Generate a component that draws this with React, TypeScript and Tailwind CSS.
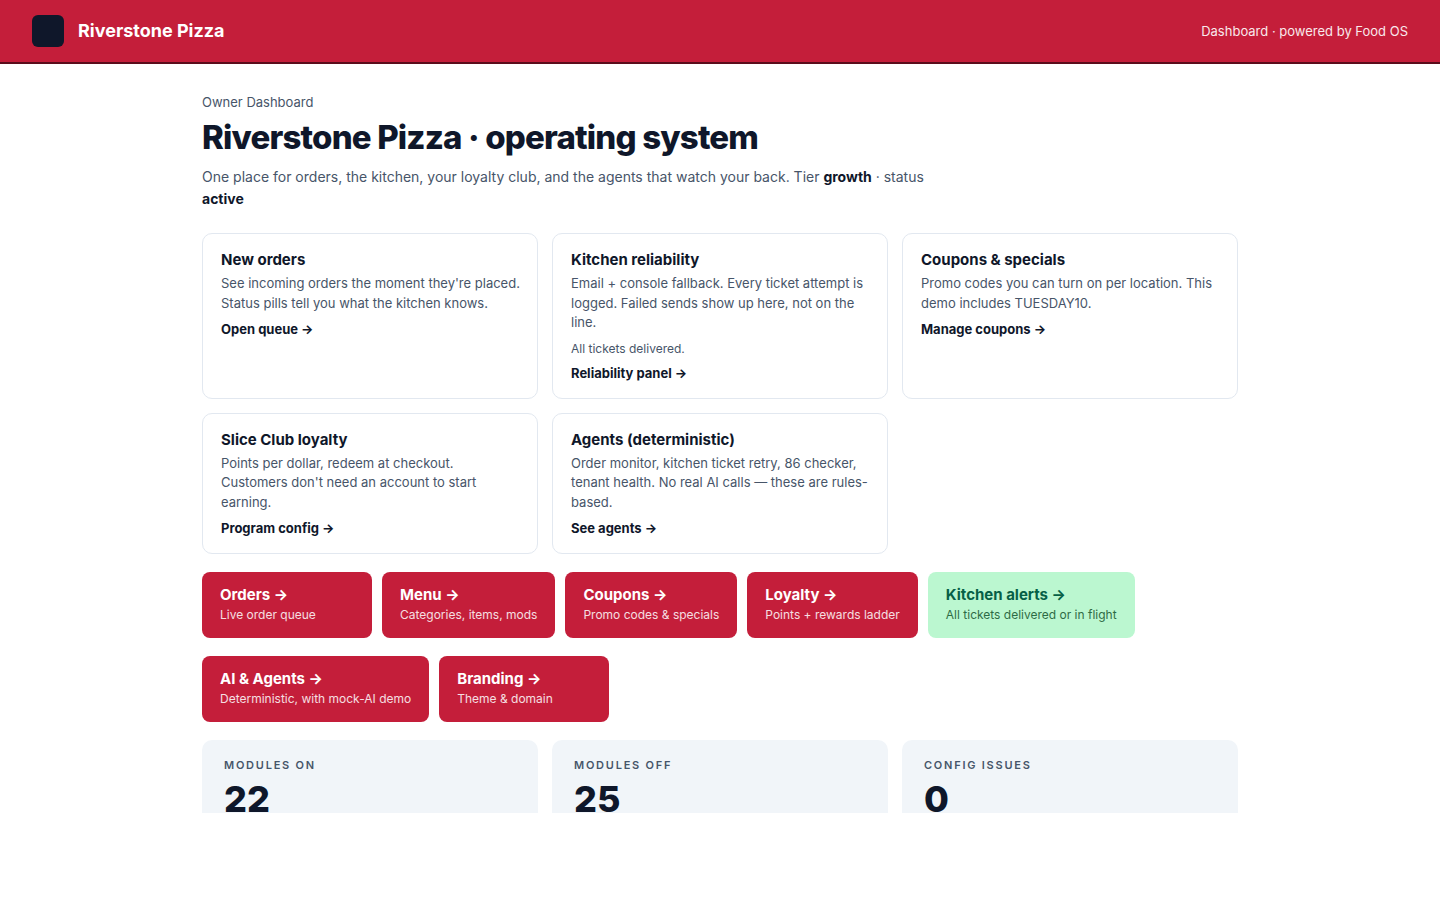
const cards = [
  { title: "New orders", body: "See incoming orders the moment they're placed. Status pills tell you what the kitchen knows.", note: "", link: "Open queue →" },
  { title: "Kitchen reliability", body: "Email + console fallback. Every ticket attempt is logged. Failed sends show up here, not on the line.", note: "All tickets delivered.", link: "Reliability panel →" },
  { title: "Coupons & specials", body: "Promo codes you can turn on per location. This demo includes TUESDAY10.", note: "", link: "Manage coupons →" },
  { title: "Slice Club loyalty", body: "Points per dollar, redeem at checkout. Customers don't need an account to start earning.", note: "", link: "Program config →" },
  { title: "Agents (deterministic)", body: "Order monitor, kitchen ticket retry, 86 checker, tenant health. No real AI calls — these are rules-based.", note: "", link: "See agents →" },
];

const actions = [
  { title: "Orders →", sub: "Live order queue", ok: false },
  { title: "Menu →", sub: "Categories, items, mods", ok: false },
  { title: "Coupons →", sub: "Promo codes & specials", ok: false },
  { title: "Loyalty →", sub: "Points + rewards ladder", ok: false },
  { title: "Kitchen alerts →", sub: "All tickets delivered or in flight", ok: true },
  { title: "AI & Agents →", sub: "Deterministic, with mock-AI demo", ok: false },
  { title: "Branding →", sub: "Theme & domain", ok: false },
];

const stats = [
  { label: "MODULES ON", value: "22" },
  { label: "MODULES OFF", value: "25" },
  { label: "CONFIG ISSUES", value: "0" },
];

export default function App() {
  return (
    <div className="min-h-screen bg-white font-['Inter',sans-serif] text-[#0f172a]">
      <header className="flex items-center justify-between border-b-2 border-[#5a0d1c] bg-[#c41e3a] px-8 py-[15px] text-white">
        <div className="flex items-center gap-3.5">
          <span className="size-8 rounded-md bg-[#0f172a]" />
          <span className="text-lg leading-7 font-bold">Riverstone Pizza</span>
        </div>
        <span className="text-[13px] leading-5 opacity-90">Dashboard · powered by Food OS</span>
      </header>
      <main className="mx-auto max-w-[1100px] px-8 pt-7">
        <p className="text-[13px] leading-5 text-[#475569]">Owner Dashboard</p>
        <h1 className="mt-1 text-[33px] leading-[42px] font-extrabold tracking-tight">Riverstone Pizza · operating system</h1>
        <p className="mt-2 max-w-[760px] text-[14px] leading-[22px] text-[#475569]">
          One place for orders, the kitchen, your loyalty club, and the agents that watch your back. Tier{" "}
          <strong className="font-bold text-[#0f172a]">growth</strong> · status <strong className="font-bold text-[#0f172a]">active</strong>
        </p>
        <section className="mt-[23px] grid grid-cols-3 gap-3.5">
          {cards.map((c) => (
            <article key={c.title} className="rounded-[10px] border border-[#e2e8f0] py-4 pr-3.5 pl-[18px]">
              <h2 className="text-[15px] leading-5 font-bold">{c.title}</h2>
              <p className="mt-1 text-[13px] leading-[1.5] text-[#475569]">{c.body}</p>
              {c.note && <p className="mt-2 text-xs leading-4 text-[#475569]">{c.note}</p>}
              <a href="#" className="mt-2 block text-[13px] leading-[17px] font-bold">{c.link}</a>
            </article>
          ))}
        </section>
        <nav className="mt-[18px] flex flex-wrap gap-x-2.5 gap-y-[18px]">
          {actions.map((a) => (
            <a
              key={a.title}
              href="#"
              className={`min-w-[170px] rounded-lg px-[18px] py-3.5 ${a.ok ? "bg-[#bbf7d0]" : "bg-[#c41e3a] text-white"}`}
            >
              <span className={`block text-[15px] leading-[18px] font-bold ${a.ok ? "text-[#065f46]" : ""}`}>{a.title}</span>
              <span className={`mt-0.5 block text-xs leading-[18px] opacity-85 ${a.ok ? "text-[#14532d]" : ""}`}>{a.sub}</span>
            </a>
          ))}
        </nav>
        <section className="mt-[18px] grid grid-cols-3 gap-3.5">
          {stats.map((s) => (
            <div key={s.label} className="rounded-t-[10px] bg-[#f1f5f9] px-[22px] pt-[18px]">
              <p className="text-[11px] leading-[14px] font-semibold tracking-[0.16em] text-[#475569]">{s.label}</p>
              <p className="mt-3.5 text-4xl leading-[27px] font-extrabold">{s.value}</p>
            </div>
          ))}
        </section>
      </main>
    </div>
  );
}
